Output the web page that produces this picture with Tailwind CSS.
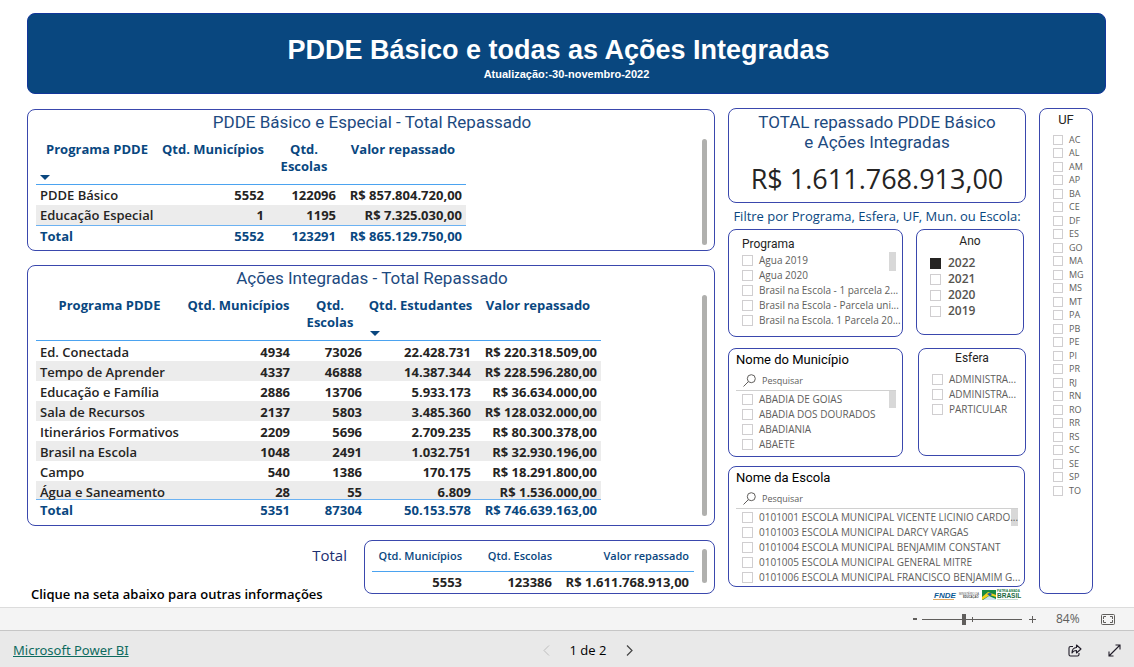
<!DOCTYPE html>
<html lang="pt-BR">
<head>
<meta charset="utf-8">
<title>PDDE Básico e todas as Ações Integradas</title>
<script src="https://cdn.jsdelivr.net/npm/@tailwindcss/browser@4"></script>
</head>
<body class="flex min-h-screen flex-col bg-white font-['Open_Sans','Noto_Sans',sans-serif] text-[#252423]">
<main class="flex grow flex-col pt-[13px] pr-7 pl-[27px]">
  <header class="flex h-[81px] flex-col items-center rounded-lg border border-[#12369a] bg-[#09477f] pt-5 font-['Liberation_Sans',sans-serif] font-bold text-white">
    <h1 class="pr-4 text-[27px] leading-8">PDDE Básico e todas as Ações Integradas</h1>
    <p class="text-[11px] leading-4">Atualização:-30-novembro-2022</p>
  </header>

  <div class="mt-[14px] mr-[13px] grid grid-cols-[minmax(0,688fr)_minmax(0,298fr)_minmax(0,54fr)] items-start gap-x-[13px]">
    <div class="flex flex-col pt-px">
      <section class="flex h-[142px] justify-between rounded-lg border border-[#3a48ad] pr-[7px] pl-2">
        <div class="grow">
          <h2 class="pl-[6px] text-center font-[Roboto,sans-serif] text-[17px] leading-6 text-[#1d4a80]">PDDE Básico e Especial - Total Repassado</h2>
          <table class="mt-[6px] w-[430px] table-fixed text-[13px] leading-[17px]">
            <colgroup><col class="w-[122px]"><col class="w-[110px]"><col class="w-[72px]"><col class="w-[126px]"></colgroup>
            <thead class="text-[#09477f]">
              <tr class="h-11 border-b border-[#4ba3f0] align-top">
                <th class="relative p-0 pt-px font-bold">Programa PDDE<svg class="absolute bottom-1 left-1" width="10" height="5" viewBox="0 0 10 5" aria-hidden="true"><path d="M0 0h10L5 5z" fill="#09477f"/></svg></th>
                <th class="p-0 pt-px font-bold">Qtd. Municípios</th><th class="p-0 pt-px font-bold">Qtd.<br>Escolas</th><th class="p-0 pt-px font-bold">Valor repassado</th>
              </tr>
            </thead>
            <tbody id="basico"></tbody>
          </table>
        </div>
        <div class="mt-[29px] h-[106px] w-[5px] rounded-full bg-[#b0b0ae]"></div>
      </section>

      <section class="mt-[14px] flex h-[261px] justify-between rounded-lg border border-[#3a48ad] pr-[7px] pl-2">
        <div class="grow">
          <h2 class="pl-[6px] text-center font-[Roboto,sans-serif] text-[17px] leading-6 text-[#1d4a80]">Ações Integradas - Total Repassado</h2>
          <table class="mt-[6px] w-[565px] table-fixed text-[13px] leading-[17px]">
            <colgroup><col class="w-[147px]"><col class="w-[111px]"><col class="w-[72px]"><col class="w-[109px]"><col class="w-[126px]"></colgroup>
            <thead class="text-[#09477f]">
              <tr class="h-11 border-b border-[#4ba3f0] align-top">
                <th class="p-0 pt-px font-bold">Programa PDDE</th><th class="p-0 pt-px font-bold">Qtd. Municípios</th><th class="p-0 pt-px font-bold">Qtd.<br>Escolas</th>
                <th class="relative p-0 pt-px font-bold">Qtd. Estudantes<svg class="absolute bottom-1 left-1" width="10" height="5" viewBox="0 0 10 5" aria-hidden="true"><path d="M0 0h10L5 5z" fill="#09477f"/></svg></th>
                <th class="p-0 pt-px font-bold">Valor repassado</th>
              </tr>
            </thead>
            <tbody id="integradas"></tbody>
          </table>
        </div>
        <div class="mt-[29px] h-[221px] w-[5px] rounded-full bg-[#b0b0ae]"></div>
      </section>

      <div class="mt-[14px] flex justify-between">
        <div class="flex grow flex-col justify-between">
          <p class="pr-[17px] text-right text-[15px] leading-[30px] text-[#1c2f70]">Total</p>
          <p class="-mb-2 pl-1 text-[13px] leading-4 font-semibold text-black">Clique na seta abaixo para outras informações</p>
        </div>
        <section class="flex h-[54px] w-[351px] justify-between rounded-lg border border-[#3a48ad] pr-[7px] pl-[7px]">
          <table class="w-[322px] table-fixed text-right text-[13px] leading-[18px] font-bold">
            <colgroup><col class="w-[95px]"><col class="w-[90px]"><col class="w-[137px]"></colgroup>
            <thead class="text-[11px] text-[#09477f]">
              <tr class="h-[30px] border-b border-[#4ba3f0]"><th class="p-0 pr-[5px] font-semibold">Qtd. Municípios</th><th class="p-0 pr-[5px] font-semibold">Qtd. Escolas</th><th class="p-0 pr-[5px] font-semibold">Valor repassado</th></tr>
            </thead>
            <tbody><tr><td class="p-0 pr-[5px]">5553</td><td class="p-0 pr-[5px]">123386</td><td class="p-0 pr-[5px]">R$ 1.611.768.913,00</td></tr></tbody>
          </table>
          <div class="mt-2 h-[34px] w-[5px] rounded-full bg-[#b0b0ae]"></div>
        </section>
      </div>
    </div>

    <div class="flex flex-col">
      <section class="flex h-[95px] flex-col items-center rounded-lg border border-[#3a48ad] pt-[3px]">
        <h2 class="text-center font-[Roboto,sans-serif] text-[17px] leading-5 text-[#1d4a80]">TOTAL repassado PDDE Básico<br>e Ações Integradas</h2>
        <p class="mt-[9px] text-[27px] leading-9">R$ 1.611.768.913,00</p>
      </section>
      <p class="py-1 text-center text-[13px] leading-[18px] whitespace-nowrap text-[#09477f]">Filtre por Programa, Esfera, UF, Mun. ou Escola:</p>

      <div class="flex items-start justify-between pr-[2px]">
        <section class="flex h-[108px] w-[175px] justify-between rounded-lg border border-[#3a48ad] pt-[6px] pr-[6px] pl-[13px]">
          <div class="w-full min-w-0"><h3 class="font-[Roboto,sans-serif] text-[12px] leading-[17px]">Programa</h3><ul id="programa" class="text-[10px] text-[#605e5c]"></ul></div>
          <div class="mt-4 h-[19px] w-[7px] shrink-0 bg-[#d8d8d8]"></div>
        </section>
        <section class="h-[106px] w-[108px] rounded-lg border border-[#3a48ad] pt-[2px] pl-[13px]">
          <h3 class="pr-[13px] text-center font-[Roboto,sans-serif] text-[12px] leading-[18px]">Ano</h3>
          <ul id="ano" class="mt-[5px] text-[12px] font-semibold text-[#55534f]"></ul>
        </section>
      </div>

      <div class="mt-[11px] flex items-start justify-between">
        <section class="h-[109px] w-[175px] rounded-lg border border-[#3a48ad] pr-[6px] pl-[7px]">
          <h3 class="font-[Roboto,sans-serif] text-[13px] leading-[22px] text-black">Nome do Município</h3>
          <label class="flex h-5 items-center gap-[6px] border-b border-[#d0d0d0] pl-[7px]">
            <svg class="shrink-0" width="13" height="13" viewBox="0 0 13 13" fill="none" stroke="#605e5c" aria-hidden="true"><circle cx="8.300" cy="4.700" r="4"/><path d="M5.400 7.600L.5 12.500"/></svg>
            <input type="search" aria-label="Pesquisar município" placeholder="Pesquisar" class="w-full min-w-0 text-[9px] outline-none placeholder:text-[#605e5c]">
          </label>
          <div class="flex items-start justify-between pl-[6px]"><ul id="municipio" class="w-full min-w-0 pt-px text-[10px] text-[#605e5c]"></ul><div class="h-[17px] w-[7px] shrink-0 bg-[#d8d8d8]"></div></div>
        </section>
        <section class="h-[108px] w-[108px] rounded-lg border border-[#3a48ad] pt-[1px] pl-[13px]">
          <h3 class="pr-[13px] text-center font-[Roboto,sans-serif] text-[12px] leading-4">Esfera</h3>
          <ul id="esfera" class="mt-[6px] text-[10px] text-[#605e5c]"></ul>
        </section>
      </div>

      <section class="mt-[9px] mr-px h-[121px] rounded-lg border border-[#3a48ad] pr-[6px] pl-[7px]">
        <h3 class="font-[Roboto,sans-serif] text-[13px] leading-[22px] text-black">Nome da Escola</h3>
        <label class="flex h-5 items-center gap-[6px] border-b border-[#d0d0d0] pl-[7px]">
          <svg class="shrink-0" width="13" height="13" viewBox="0 0 13 13" fill="none" stroke="#605e5c" aria-hidden="true"><circle cx="8.300" cy="4.700" r="4"/><path d="M5.400 7.600L.5 12.500"/></svg>
          <input type="search" aria-label="Pesquisar escola" placeholder="Pesquisar" class="w-full min-w-0 text-[9px] outline-none placeholder:text-[#605e5c]">
        </label>
        <div class="flex items-start justify-between pl-[6px]"><ul id="escola" class="z-10 w-full min-w-0 pt-px text-[10px] text-[#605e5c]"></ul><div class="h-[17px] w-[7px] shrink-0 bg-[#d8d8d8]"></div></div>
      </section>

      <div class="mt-[2px] mr-1 flex justify-end">
        <svg width="89" height="13" viewBox="0 0 89 13" role="img" aria-label="FNDE, Ministério da Educação, Brasil">
          <text x="1" y="9" font-family="Liberation Sans" font-size="8" font-weight="bold" font-style="italic" fill="#0b5a96">FNDE</text>
          <path d="M0 10.500h21" stroke="#e0a860" stroke-width="1"/>
          <text x="26" y="6" font-family="Liberation Sans" font-size="2.700" fill="#555">MINISTÉRIO DA</text>
          <text x="30" y="9" font-family="Liberation Sans" font-size="2.700" font-weight="bold" fill="#444">EDUCAÇÃO</text>
          <path d="M49 1h14v10H49z" fill="#178a43"/><path d="M49 8l6-5 8 3v2l-6-2-8 5z" fill="#f2cf1d"/><path d="M54 5q3-2 5 0l-2 2z" fill="#1d5ba5"/><path d="M50 11l6-4 7 3v1z" fill="#cfe3ee"/>
          <text x="64" y="3" font-family="Liberation Sans" font-size="3" font-weight="bold" fill="#1c7a45">PÁTRIA AMADA</text>
          <text x="64" y="9" font-family="Liberation Sans" font-size="6.500" font-weight="bold" fill="#1c6b3f">BRASIL</text>
          <path d="M64 10.500h21" stroke="#8fb59f" stroke-width=".5"/>
        </svg>
      </div>
    </div>

    <section class="h-[486px] rounded-lg border border-[#3a48ad] pt-[2px] pl-[13px]">
      <h3 class="pr-[13px] text-center font-[Roboto,sans-serif] text-[13px] leading-[18px]">UF</h3>
      <ul id="uf" class="mt-1 flex h-[364px] flex-col justify-between text-[9px] text-[#605e5c]"></ul>
    </section>
  </div>
</main>

<div class="flex h-[23px] items-center justify-end border-t border-[#dcdcdc] bg-[#f4f4f4] pr-[19px] text-[12px] text-[#605e5c]">
  <button class="flex h-4 w-[14px] items-center justify-center" aria-label="Reduzir"><svg width="4" height="2" viewBox="0 0 4 2" aria-hidden="true"><path d="M0 0h4v2H0z" fill="#605e5c"/></svg></button>
  <svg width="100" height="13" viewBox="0 0 100 13" role="img" aria-label="Zoom"><path d="M0 6.500h100" stroke="#605e5c"/><path d="M40 1h4v11h-4z" fill="#605e5c"/><path d="M50.500 4v5" stroke="#605e5c"/></svg>
  <button class="w-5" aria-label="Ampliar"><svg class="mx-auto" width="8" height="8" viewBox="0 0 8 8" stroke="#605e5c" aria-hidden="true"><path d="M4.500 1v7M1 4.500h7"/></svg></button>
  <span class="ml-[14px] w-[45px]">84%</span>
  <button aria-label="Ajustar à página"><svg width="14" height="11" viewBox="0 0 14 11" fill="none" stroke="#605e5c" aria-hidden="true"><rect x=".5" y=".5" width="13" height="10" rx="1"/><path d="M2.500 5V2.500H5M9 2.500h2.500V5M11.500 6v2.500H9M5 8.500H2.500V6"/></svg></button>
</div>
<footer class="grid h-[37px] grid-cols-3 items-center border-t border-[#c6c6c6] bg-[#e9e9e9] px-[13px] pt-[3px] text-[13px]">
  <a href="#" class="justify-self-start font-['Noto_Sans',sans-serif] text-[#0e6b5f] underline">Microsoft Power BI</a>
  <nav class="flex items-center justify-center gap-5 pl-[42px] whitespace-nowrap text-black">
    <button aria-label="Anterior"><svg width="7" height="11" viewBox="0 0 7 11" fill="none" stroke="#bdbdbd" aria-hidden="true"><path d="M6 .5L1 5.500l5 5"/></svg></button>
    <span>1 de 2</span>
    <button aria-label="Próxima"><svg width="7" height="11" viewBox="0 0 7 11" fill="none" stroke="#444" stroke-width="1.200" aria-hidden="true"><path d="M1 .5l5 5-5 5"/></svg></button>
  </nav>
  <div class="flex items-center justify-end gap-[26px]">
    <button aria-label="Compartilhar"><svg width="14" height="13" viewBox="0 0 14 13" fill="none" stroke="#201c28" stroke-width="1.100" stroke-linejoin="round" aria-hidden="true"><path d="M5 2.500H2.500a1.500 1.500 0 0 0-1.500 1.500v6.500A1.500 1.500 0 0 0 2.500 12h7a1.500 1.500 0 0 0 1.500-1.500V9"/><path d="M8.500 1l4.500 4-4.500 4V6.500C6 6.500 4.700 7.500 4 9c0-3.500 1.500-5.300 4.500-5.500z"/></svg></button>
    <button aria-label="Tela inteira"><svg width="13" height="13" viewBox="0 0 13 13" fill="none" stroke="#201c28" stroke-width="1.100" aria-hidden="true"><path d="M1 12L12 1M7.500 1H12v4.500M1 7.500V12h4.500"/></svg></button>
  </div>
</footer>

<script>
const rows = (id, data, total, rowBox, lastBox) => {
  document.getElementById(id).innerHTML = data.map((r, i) =>
    '<tr class="' + (i % 2 ? 'bg-[#ececec]' : '') + '">' + r.map((c, j) =>
      '<td class="' + (j ? 'p-0 pr-1 text-right font-bold whitespace-nowrap' : 'p-0 pl-1 font-semibold whitespace-nowrap') + '"><div class="' +
      (i === data.length - 1 ? lastBox : rowBox) + '">' + c + '</div></td>').join('') + '</tr>'
  ).join('') + '<tr class="border-t border-[#6cb2f2] font-bold text-[#09477f]">' + total.map((c, j) =>
    '<td class="' + (j ? 'p-0 pr-1 text-right whitespace-nowrap' : 'p-0 pl-1') + '"><div class="leading-[21px]">' + c + '</div></td>').join('') + '</tr>';
};
rows('basico', [['PDDE Básico', '5552', '122096', 'R$ 857.804.720,00'], ['Educação Especial', '1', '1195', 'R$ 7.325.030,00']],
  ['Total', '5552', '123291', 'R$ 865.129.750,00'], 'h-5 leading-5', 'h-5 leading-5');
rows('integradas', [
  ['Ed. Conectada', '4934', '73026', '22.428.731', 'R$ 220.318.509,00'],
  ['Tempo de Aprender', '4337', '46888', '14.387.344', 'R$ 228.596.280,00'],
  ['Educação e Família', '2886', '13706', '5.933.173', 'R$ 36.634.000,00'],
  ['Sala de Recursos', '2137', '5803', '3.485.360', 'R$ 128.032.000,00'],
  ['Itinerários Formativos', '2209', '5696', '2.709.235', 'R$ 80.300.378,00'],
  ['Brasil na Escola', '1048', '2491', '1.032.751', 'R$ 32.930.196,00'],
  ['Campo', '540', '1386', '170.175', 'R$ 18.291.800,00'],
  ['Água e Saneamento', '28', '55', '6.809', 'R$ 1.536.000,00']],
  ['Total', '5351', '87304', '50.153.578', 'R$ 746.639.163,00'], 'h-5 leading-[22px]', 'h-[18px] leading-[22px]');

const list = (id, items, rowClass, boxClass, checked) => {
  document.getElementById(id).innerHTML = items.map((t, i) =>
    '<li><label class="' + rowClass + '"><input type="checkbox" class="' + boxClass + '"' + (i === checked ? ' checked' : '') + '>' + t + '</label></li>').join('');
};
const row = 'flex h-[15px] items-center gap-[6px] whitespace-nowrap';
const box = 'size-[11px] shrink-0 appearance-none border border-[#d0ced0] bg-white checked:border-[#252423] checked:bg-[#252423]';
list('programa', ['Agua 2019', 'Agua 2020', 'Brasil na Escola - 1 parcela 2...', 'Brasil na Escola - Parcela uni...', 'Brasil na Escola. 1 Parcela 20...'], row, box);
list('ano', ['2022', '2021', '2020', '2019'], 'flex h-4 items-center gap-[7px]', box, 0);
list('municipio', ['ABADIA DE GOIAS', 'ABADIA DOS DOURADOS', 'ABADIANIA', 'ABAETE'], row, box);
list('esfera', ['ADMINISTRA...', 'ADMINISTRA...', 'PARTICULAR'], row, box);
list('escola', ['0101001 ESCOLA MUNICIPAL VICENTE LICINIO CARDO...', '0101003 ESCOLA MUNICIPAL DARCY VARGAS', '0101004 ESCOLA MUNICIPAL BENJAMIM CONSTANT', '0101005 ESCOLA MUNICIPAL GENERAL MITRE', '0101006 ESCOLA MUNICIPAL FRANCISCO BENJAMIM G...'], row, box);
list('uf', 'AC AL AM AP BA CE DF ES GO MA MG MS MT PA PB PE PI PR RJ RN RO RR RS SC SE SP TO'.split(' '), 'flex h-[13px] items-center gap-[6px]', 'size-[10px] shrink-0 appearance-none border border-[#d0ced0] bg-white checked:bg-[#252423]');
</script>
</body>
</html>
